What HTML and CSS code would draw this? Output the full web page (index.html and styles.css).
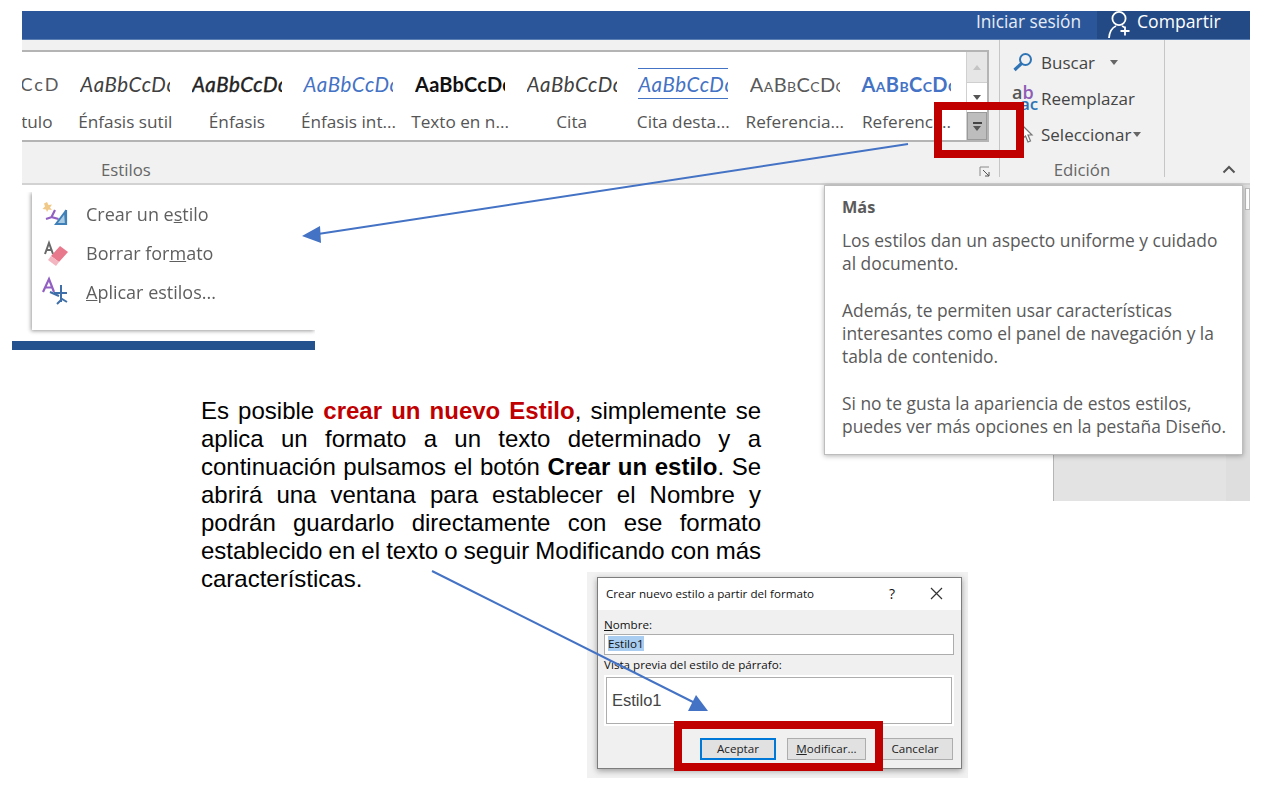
FILE: index.html
```html
<!DOCTYPE html>
<html lang="es">
<head>
    <meta charset="UTF-8">
    <meta name="viewport" content="width=device-width, initial-scale=1.0">
    <title>Crear un nuevo estilo</title>
    <link rel="stylesheet" href="styles.css">
</head>
<body>
<main class="slide">

    <!-- zona de documento detras del tooltip -->
    <div class="doc-area"><div class="doc-scroll"><div class="doc-thumb"></div></div></div>

    <section class="ribbon">
        <div class="titlebar">
            <span class="signin">Iniciar sesión</span>
            <div class="share">
                <svg class="share-icon" width="24" height="24" viewBox="0 0 24 24" fill="none" stroke="#fff" stroke-width="1.8">
                    <circle cx="11" cy="7.5" r="6.600"/>
                    <path d="M1 27c.5-6 3.500-10.500 7-12M14 15c1 .4 2 1 3 1.800M17 15.500v9M12.500 20h9"/>
                </svg>
                <span>Compartir</span>
            </div>
        </div>
        <div class="ribbon-body">
            <div class="group-styles">
                <div class="gallery-wrap">
                    <div class="gallery">
                        <div class="style-item first"><span class="sample s-title">CcD</span><span class="label">tulo</span></div>
                        <div class="style-item"><span class="sample s-subtle">AaBbCcDc</span><span class="label">Énfasis sutil</span></div>
                        <div class="style-item"><span class="sample s-emph">AaBbCcDc</span><span class="label">Énfasis</span></div>
                        <div class="style-item"><span class="sample s-intense">AaBbCcDc</span><span class="label">Énfasis int...</span></div>
                        <div class="style-item"><span class="sample s-strong">AaBbCcDc</span><span class="label">Texto en n...</span></div>
                        <div class="style-item"><span class="sample s-subtle">AaBbCcDc</span><span class="label">Cita</span></div>
                        <div class="style-item"><span class="sample s-intense s-lined">AaBbCcDc</span><span class="label">Cita desta...</span></div>
                        <div class="style-item"><span class="sample s-ref">AaBbCcDc</span><span class="label">Referencia...</span></div>
                        <div class="style-item"><span class="sample s-ref s-ref-strong">AaBbCcDc</span><span class="label">Referenci...</span></div>
                    </div>
                    <div class="gallery-scroll">
                        <div class="scroll-btn up"><i class="tri-up"></i></div>
                        <div class="scroll-btn down"><i class="tri-down"></i></div>
                        <div class="scroll-btn more"><i class="more-line"></i><i class="tri-down"></i></div>
                    </div>
                </div>
                <div class="group-foot">
                    <span class="group-name">Estilos</span>
                    <svg class="launcher" width="12" height="12" viewBox="0 0 12 12" fill="none" stroke="#8a8a8a">
                        <path d="M1 10V1h9"/>
                        <path d="M4 4l6 6M10 6v4H6" stroke="#555"/>
                    </svg>
                </div>
            </div>
            <div class="group-edit">
                <ul class="edit-list">
                    <li>
                        <svg class="edit-icon" width="22" height="20" viewBox="0 0 22 20" fill="none">
                            <circle cx="13.500" cy="7.500" r="5.500" stroke="#2f75b5" stroke-width="2"/>
                            <path d="M9.500 11.500L2.500 18" stroke="#2f75b5" stroke-width="3.200"/>
                        </svg>
                        <span>Buscar</span><i class="tri-down menu-tri wide"></i>
                    </li>
                    <li>
                        <span class="abac"><b class="ab">a<em>b</em></b><b class="ac">ac</b></span>
                        <span>Reemplazar</span>
                    </li>
                    <li>
                        <svg class="edit-icon" width="22" height="22" viewBox="0 0 22 22" fill="none">
                            <path d="M10 2l10 10h-4l2.500 6-2.500 1-2.500-6L10 16z" stroke="#777" stroke-width="1.200" fill="#fff"/>
                        </svg>
                        <span>Seleccionar</span><i class="tri-down menu-tri"></i>
                    </li>
                </ul>
                <span class="group-name">Edición</span>
            </div>
            <div class="group-rest">
                <svg width="14" height="9" viewBox="0 0 14 9" fill="none" stroke="#555" stroke-width="2"><path d="M1.500 7.500L7 2l5.500 5.500"/></svg>
            </div>
        </div>
    </section>

    <section class="style-menu">
        <div class="menu-item">
            <svg class="menu-icon" width="28" height="26" viewBox="0 0 28 26">
                <path d="M5 1l1.500 3 3.500-.5-2 3 2 2.500-3.500-.5L5 11l-1-2.500-3.500-.5 2.500-2.500-1-3z" fill="#f0c888"/>
                <path d="M13 9l-3.500 7 7 2M4 18l6-2" fill="none" stroke="#9160c2" stroke-width="2.200"/>
                <path d="M23 11L14 23h10z" fill="#a9cbe4" stroke="#3f80b8" stroke-width="2"/>
                <path d="M24 9v15" stroke="#3f80b8" stroke-width="2.200"/>
            </svg>
            <span>Crear un e<u>s</u>tilo</span>
        </div>
        <div class="menu-item">
            <svg class="menu-icon" width="28" height="26" viewBox="0 0 28 26">
                <path d="M3 14l4-11 4 11M4.500 10h5" fill="none" stroke="#6a6a6a" stroke-width="2"/>
                <path d="M18 6l8 6-9 10-8-6z" fill="#e8788c"/>
                <path d="M9 16l8 6-3 4-8-6z" fill="#f3b5c0"/>
            </svg>
            <span>Borrar for<u>m</u>ato</span>
        </div>
        <div class="menu-item">
            <svg class="menu-icon" width="28" height="26" viewBox="0 0 28 26">
                <path d="M1 13L7 0l5 13M3.500 8.500h7" fill="none" stroke="#9160c2" stroke-width="2.200"/>
                <path d="M19 6v17M12 14h13M8 13l9 4M15 25l5-5 5 3" fill="none" stroke="#3f6fa8" stroke-width="2"/>
            </svg>
            <span><u>A</u>plicar estilos...</span>
        </div>
    </section>
    <div class="menu-bar"></div>

    <aside class="tooltip">
        <h3>Más</h3>
        <p>Los estilos dan un aspecto uniforme y cuidado<br>al documento.</p>
        <p>Además, te permiten usar características<br>interesantes como el panel de navegación y la<br>tabla de contenido.</p>
        <p>Si no te gusta la apariencia de estos estilos,<br>puedes ver más opciones en la pestaña Diseño.</p>
    </aside>

    <p class="explain">Es posible <strong class="hl">crear un nuevo Estilo</strong>, simplemente se aplica un formato a un texto determinado y a continuación pulsamos el botón <strong>Crear un estilo</strong>. Se abrirá una ventana para establecer el Nombre y podrán guardarlo directamente con ese formato establecido en el texto o seguir Modificando con más características.</p>

    <div class="dialog-halo">
        <div class="dialog">
            <header class="dialog-title">
                <span class="dialog-caption">Crear nuevo estilo a partir del formato</span>
                <span class="dialog-help">?</span>
                <svg width="13" height="13" viewBox="0 0 13 13" stroke="#333" stroke-width="1.200"><path d="M1 1l11 11M12 1L1 12"/></svg>
            </header>
            <div class="dialog-body">
                <label class="field-label"><u>N</u>ombre:</label>
                <div class="name-input"><span class="selected">Estilo1</span></div>
                <label class="field-label second">Vista previa del estilo de párrafo:</label>
                <div class="preview"><span>Estilo1</span></div>
                <div class="dialog-buttons">
                    <button class="default">Aceptar</button>
                    <button class="wide-btn"><u>M</u>odificar...</button>
                    <button>Cancelar</button>
                </div>
            </div>
        </div>
    </div>

    <div class="red-box box-more"></div>
    <div class="red-box box-buttons"></div>

    <svg class="arrows" width="1268" height="795" viewBox="0 0 1268 795">
        <path d="M908 144L318 234" stroke="#4472c4" stroke-width="2"/>
        <polygon points="302,236 320,226 321,243" fill="#4472c4"/>
        <path d="M432 571L697 704" stroke="#4472c4" stroke-width="2"/>
        <polygon points="696,695 708,711 688,711" fill="#4472c4"/>
    </svg>
</main>
</body>
</html>
```

FILE: styles.css
```css
* {
    box-sizing: border-box;
}
html, body {
    margin: 0;
    padding: 0;
    background: #fff;
}
.slide {
    position: relative;
    width: 1268px;
    height: 795px;
    overflow: hidden;
    font-family: "Open Sans", "Noto Sans", sans-serif;
}

/* ribbon */
.ribbon {
    position: absolute;
    left: 22px;
    top: 11px;
    width: 1228px;
    height: 174px;
    display: flex;
    flex-direction: column;
    background: #f1f1f1;
    border-bottom: 2px solid #d2d2d2;
}
.titlebar {
    flex: none;
    height: 29px;
    display: flex;
    justify-content: flex-end;
    align-items: stretch;
    background: #2b579a;
    color: #fff;
    border-bottom: 1px solid #5c80b4;
}
.signin {
    margin-right: 16px;
    font-size: 17.300px;
    line-height: 21px;
    color: #e6ecf5;
}
.share {
    width: 153px;
    display: flex;
    gap: 5px;
    padding-left: 11px;
    background: #234a84;
    font-size: 17.600px;
    line-height: 21px;
}
.share-icon {
    flex: none;
    overflow: visible;
}
.ribbon-body {
    flex: 1;
    min-height: 0;
    display: flex;
}
.group-styles {
    width: 978px;
    padding-top: 10px;
    border-right: 1px solid #c6c6c6;
    margin-bottom: 6px;
    display: flex;
    flex-direction: column;
}
.gallery-wrap {
    flex: none;
    width: 967px;
    height: 92px;
    display: flex;
    background: #fff;
    border-top: 2px solid #b4b4b4;
    border-bottom: 2px solid #b4b4b4;
}
.gallery {
    width: 944px;
    display: grid;
    grid-template-columns: 47.500px repeat(8, 111.600px);
    overflow: hidden;
}
.style-item {
    display: flex;
    flex-direction: column;
    align-items: center;
    white-space: nowrap;
    overflow: hidden;
}
.style-item.first {
    align-items: flex-end;
    padding-right: 9px;
}
.style-item.first .label {
    padding-right: 8px;
}
.sample {
    display: block;
    flex: none;
    width: 90px;
    height: 34px;
    margin-top: 16px;
    overflow: hidden;
    font-family: Lato, "Open Sans", sans-serif;
    font-size: 20.500px;
    line-height: 32px;
    letter-spacing: .6px;
}
.first .sample {
    width: auto;
}
.label {
    margin-top: 8px;
    font-size: 17.200px;
    line-height: 24px;
    color: #555;
}
.s-title {
    color: #5a5a5a;
    letter-spacing: 2px;
    font-size: 18px;
}
.s-subtle {
    font-style: italic;
    color: #404040;
}
.s-emph {
    font-style: italic;
    color: #222;
    -webkit-text-stroke: .4px #222;
}
.s-intense {
    font-style: italic;
    color: #4472c4;
}
.s-strong {
    font-size: 20px;
    font-weight: 700;
    color: #111;
    letter-spacing: .2px;
}
.s-lined {
    height: 31px;
    margin-bottom: 3px;
    line-height: 31px;
    border-top: 1.500px solid #4472c4;
    border-bottom: 1.500px solid #4472c4;
}
.s-ref {
    font-variant: small-caps;
    font-size: 20px;
    color: #595959;
    letter-spacing: .4px;
}
.s-ref-strong {
    font-weight: 700;
    color: #4472c4;
}
.gallery-scroll {
    width: 23px;
    display: flex;
    flex-direction: column;
    border-left: 1px solid #d0d0d0;
    border-right: 2px solid #b4b4b4;
}
.scroll-btn {
    display: flex;
    flex-direction: column;
    align-items: center;
    justify-content: center;
    gap: 2px;
}
.scroll-btn.up {
    height: 31px;
    background: #e6e6e6;
    border-bottom: 1px solid #cfcfcf;
}
.scroll-btn.down {
    height: 29px;
    background: #fff;
}
.scroll-btn.more {
    flex: 1;
    background: #bdbdbd;
    border: 1px solid #9a9a9a;
}
.tri-up, .tri-down {
    display: block;
    width: 0;
    height: 0;
    border-left: 4.500px solid transparent;
    border-right: 4.500px solid transparent;
}
.tri-up {
    border-bottom: 5px solid #c4c4c4;
}
.tri-down {
    border-top: 5px solid #555;
}
.more-line {
    display: block;
    width: 9px;
    height: 2px;
    background: #444;
}
.group-foot {
    flex: 1;
    display: flex;
    align-items: center;
    justify-content: space-between;
    padding: 18px 8px 0 79px;
}
.group-name {
    font-size: 16.800px;
    line-height: 20px;
    color: #666;
}
.launcher {
    margin-top: 4px;
}
.group-edit {
    width: 165px;
    margin-bottom: 6px;
    border-right: 1px solid #c6c6c6;
    display: flex;
    flex-direction: column;
    align-items: center;
}
.edit-list {
    list-style: none;
    align-self: stretch;
    margin: 4px 0 0;
    padding: 0 0 0 12px;
    font-size: 17px;
    color: #444;
}
.edit-list li {
    height: 36px;
    display: flex;
    align-items: center;
    gap: 7px;
}
.edit-icon {
    flex: none;
}
.abac {
    width: 22px;
    display: flex;
    flex-direction: column;
    font-size: 18px;
    line-height: 12px;
}
.abac b {
    font-weight: 600;
}
.ab {
    color: #555;
}
.ab em {
    font-style: normal;
    color: #8e5cb5;
}
.ac {
    color: #2f75b5;
    padding-left: 8px;
    font-size: 17px;
}
.menu-tri {
    margin: 0 0 0 -5px;
    border-top-color: #666;
}
.menu-tri.wide {
    margin-left: 8px;
}
.group-edit .group-name {
    margin-top: 8px;
}
.group-rest {
    flex: 1;
    display: flex;
    align-items: flex-end;
    justify-content: flex-end;
    padding: 0 14px 9px 0;
}

/* menu recortado */
.style-menu {
    position: absolute;
    left: 32px;
    top: 192px;
    width: 283px;
    height: 138px;
    padding: 2px 0 0 10px;
    background: #fff;
    box-shadow: -1px 1px 4px rgba(0, 0, 0, .4);
    clip-path: inset(0 0 -6px -6px);
    filter: blur(.6px);
    color: #5f5f5f;
    font-size: 18px;
}
.menu-item {
    height: 39px;
    display: flex;
    align-items: center;
    gap: 16px;
}
.menu-icon {
    overflow: visible;
}
.menu-bar {
    position: absolute;
    left: 12px;
    top: 341px;
    width: 303px;
    height: 9px;
    background: #24528f;
}

/* tooltip */
.doc-area {
    position: absolute;
    left: 1053px;
    top: 185px;
    width: 197px;
    height: 316px;
    background: #e3e3e3;
    border-left: 1px solid #b5b5b5;
    display: flex;
    justify-content: flex-end;
}
.doc-scroll {
    width: 24px;
    background: #dedede;
    padding: 3px 0 0 19px;
}
.doc-thumb {
    width: 5px;
    height: 22px;
    background: #fff;
    border: 1px solid #bbb;
}
.tooltip {
    position: absolute;
    left: 824px;
    top: 185px;
    width: 419px;
    height: 270px;
    padding: 10px 10px 0 17px;
    background: #fff;
    border: 1px solid #bdbdbd;
    box-shadow: 0 1px 5px rgba(0, 0, 0, .3);
    color: #5a5a5a;
    font-size: 17.400px;
    line-height: 23.300px;
}
.tooltip h3 {
    margin: 0 0 10px;
    font-size: 16.300px;
    font-weight: 700;
    line-height: 23px;
}
.tooltip p {
    margin: 0 0 23.300px;
}

/* texto explicativo */
.explain {
    position: absolute;
    left: 201px;
    top: 397px;
    width: 560px;
    margin: 0;
    font-family: "Liberation Sans", Arial, sans-serif;
    font-size: 24px;
    line-height: 28px;
    word-spacing: -2px;
    text-align: justify;
    color: #000;
}
.hl {
    color: #c00000;
}

/* dialogo */
.dialog-halo {
    position: absolute;
    left: 587px;
    top: 572px;
    width: 381px;
    height: 206px;
    padding: 5px 6px 9px 10px;
    background: #f1f1f1;
}
.dialog {
    height: 100%;
    border: 1px solid #7d7d7d;
    box-shadow: 0 2px 6px rgba(0, 0, 0, .35);
    background: #f0f0f0;
    display: flex;
    flex-direction: column;
    font-size: 11.650px;
    color: #111;
}
.dialog-title {
    height: 32px;
    display: flex;
    align-items: center;
    padding: 0 18px 2px 8px;
    background: #fff;
}
.dialog-caption {
    flex: 1;
}
.dialog-help {
    margin-right: 35px;
    font-size: 14px;
}
.dialog-body {
    flex: 1;
    padding: 7px 7px 0 6px;
}
.field-label {
    display: block;
    line-height: 16px;
}
.field-label.second {
    margin-top: 2px;
}
.name-input {
    height: 21px;
    margin-top: 1px;
    padding: 1px 3px;
    background: #fff;
    border: 1px solid #adadad;
    line-height: 15px;
}
.selected {
    background: #a8cdf0;
}
.preview {
    height: 47px;
    margin: 4px 2px 0;
    padding-left: 5px;
    background: #fff;
    border: 1px solid #adadad;
    outline: 2px solid #fff;
    display: flex;
    align-items: center;
    font-family: "Liberation Sans", Arial, sans-serif;
    font-size: 16.500px;
    color: #444;
}
.dialog-buttons {
    display: flex;
    justify-content: flex-end;
    gap: 11px;
    margin: 14px 1px 0 0;
}
.dialog-buttons button {
    width: 76px;
    height: 22px;
    padding: 0 0 2px;
    background: #e1e1e1;
    border: 1px solid #adadad;
    font: inherit;
    color: #222;
}
.dialog-buttons .wide-btn {
    width: 79px;
}
.dialog-buttons .default {
    border: 2px solid #0078d7;
}

/* marcas rojas y flechas */
.red-box {
    position: absolute;
    border: 8px solid #c00000;
}
.box-more {
    left: 934px;
    top: 102px;
    width: 90px;
    height: 56px;
}
.box-buttons {
    left: 674px;
    top: 721px;
    width: 209px;
    height: 50px;
}
.arrows {
    position: absolute;
    left: 0;
    top: 0;
    pointer-events: none;
}
```
